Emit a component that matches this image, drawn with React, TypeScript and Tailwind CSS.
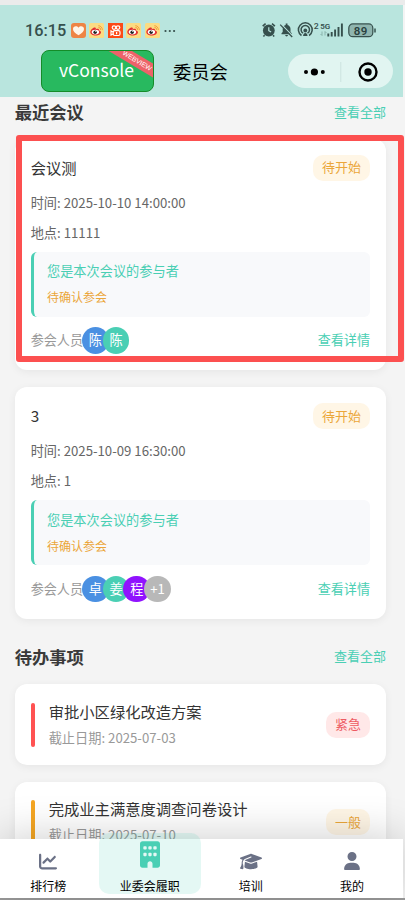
import React from 'react';
import { FaBuilding, FaChartLine, FaGraduationCap, FaUser } from 'react-icons/fa6';

interface Person {
    name: string;
    color: string;
}

interface Meeting {
    id: number;
    title: string;
    time: string;
    place: string;
    people: Person[];
}

const MEETINGS: Meeting[] = [
    {
        id: 1,
        title: '会议测',
        time: '2025-10-10 14:00:00',
        place: '11111',
        people: [
            { name: '陈', color: 'bg-[#4a90e2]' },
            { name: '陈', color: 'bg-[#4acfb4]' },
        ],
    },
    {
        id: 2,
        title: '3',
        time: '2025-10-09 16:30:00',
        place: '1',
        people: [
            { name: '卓', color: 'bg-[#4a90e2]' },
            { name: '姜', color: 'bg-[#4acfb4]' },
            { name: '程', color: 'bg-[#9013fe]' },
            { name: '+1', color: 'bg-[#b8b8b8]' },
        ],
    },
];

const TASKS = [
    { id: 1, title: '审批小区绿化改造方案', date: '2025-07-03', level: '紧急', bar: 'bg-[#ff5252]', badge: 'bg-[#ffe8e8] text-[#ee5b62]' },
    { id: 2, title: '完成业主满意度调查问卷设计', date: '2025-07-10', level: '一般', bar: 'bg-[#f5a623]', badge: 'bg-[#fff6e6] text-[#eba63a]' },
];

const WeiboIcon = () => (
    <svg viewBox="0 0 15 15" className="h-[15px] w-[15px]">
        <rect width="15" height="15" rx="1.5" fill="#fbdc83" />
        <path d="M9.3 2.7a4 4 0 0 1 4 4.4M9.4 4.4a2.2 2.2 0 0 1 2.2 2.5" fill="none" stroke="#f5a13a" strokeWidth="1" />
        <path d="M1.3 9c0-2.4 3.6-5.4 5.2-4.3.5.4.4 1 .3 1.5 2-.8 3.6-.4 3.3 1.2 1.2.3 1.9.9 1.9 1.8 0 2-2.6 3.3-5.4 3.3S1.3 11.3 1.3 9z" fill="#e22f2f" />
        <ellipse cx="6.4" cy="9.1" rx="3.7" ry="2.4" fill="#fff" />
        <circle cx="6.1" cy="9.2" r="1.7" fill="#222" />
        <circle cx="6.7" cy="8.6" r=".5" fill="#fff" />
    </svg>
);

const HeartIcon = () => (
    <svg viewBox="0 0 15 15" className="h-[15px] w-[15px]">
        <rect width="15" height="15" rx="3" fill="#ee8444" />
        <path d="M7.5 12.3C4 10 2 8.2 2 5.9 2 3.2 5.8 2.2 7.5 4.8 9.2 2.2 13 3.2 13 5.9c0 2.3-2 4.1-5.5 6.4z" fill="#fff5e9" />
    </svg>
);

const VideoIcon = () => (
    <svg viewBox="0 0 15 15" className="h-[15px] w-[15px]">
        <rect width="15" height="15" fill="#fc4a16" />
        <g fill="none" stroke="#fff" strokeWidth="1.2">
            <circle cx="6" cy="4.6" r="1.8" />
            <circle cx="10" cy="4.6" r="1.8" />
            <rect x="5.2" y="7.6" width="6.8" height="4.9" rx="1.5" />
            <path d="M5.2 9 3 7.9v4.2l2.2-1.1" />
            <path d="M8.6 8.9v2.3" />
        </g>
    </svg>
);

const StatusIcons = () => (
    <svg viewBox="0 0 118 18" className="h-[18px] w-[118px]" fill="none" stroke="#36504d">
        {/* alarm */}
        <circle cx="7.8" cy="9.5" r="5.9" fill="#36504d" stroke="none" />
        <path d="M1.7 5.2 4.6 2.7M11 2.7l2.9 2.5M3.6 14.2 2.4 15.5M12 14.2l1.2 1.3" strokeWidth="1.6" />
        <path d="M7.8 6.2v3.5l2.3 1.4" stroke="#b9e5de" strokeWidth="1.2" />
        {/* muted bell */}
        <path d="M20.5 13.2v-1l1.2-1.2V8c0-2.2 1.4-3.6 3-4V2.6h1.8V4c1.8.4 3 2 3 4v3l1.2 1.2v1zM24.2 14h2.8c0 1.9-2.8 1.9-2.8 0z" fill="#36504d" stroke="none" />
        <path d="m20 3 12.5 13" stroke="#b9e5de" strokeWidth="1.2" />
        <path d="m19.2 3.6 12 12.4" strokeWidth="1.3" />
        {/* hotspot */}
        <path d="M40.5 14.5a6.9 6.9 0 1 1 7.6 0M42.1 12.2a4.2 4.2 0 1 1 4.4 0" strokeWidth="1.5" />
        <circle cx="44.3" cy="9.5" r="1.9" fill="#36504d" stroke="none" />
        <path d="M42.1 15c0-4 4.4-4 4.4 0z" fill="#36504d" stroke="none" />
        <text x="52.7" y="7.6" fontSize="8" fontWeight="600" fontFamily="Inter, sans-serif" fill="#36504d" stroke="none">2</text>
        <text x="59.2" y="8.2" fontSize="8" fontWeight="600" fontFamily="Roboto, sans-serif" fill="#36504d" stroke="none">5G</text>
        <path d="M61 10.5v4M59.5 13l1.5 1.5M64 14.5v-4M65.5 12l-1.5-1.5" stroke="#7da8a1" strokeWidth=".8" />
        <path d="M67.3 15.5v-3M70.7 15.5V11M74.1 15.5V8.5M77.5 15.5V6M80.9 15.5V2.5" strokeWidth="1.9" />
        {/* battery */}
        <rect x="87.8" y="2.9" width="24" height="12.8" rx="4" fill="#8fb5af" strokeWidth="1.2" />
        <path d="M114 7.5v4" strokeWidth="1.5" />
        <text x="99.8" y="13.5" fontSize="11.5" fontWeight="600" textAnchor="middle" fontFamily="Roboto, sans-serif" letterSpacing=".5" fill="#29413e" stroke="none">89</text>
    </svg>
);

const Header = () => (
    <header className="mr-0.5 h-[92px] shrink-0 bg-[#b9e5de]">
        <div className="flex h-[45px] items-center justify-between pt-[6px] pr-[24px] pl-[25px]">
            <div className="flex items-center gap-[3.5px]">
                <span className="w-[42px] font-['Roboto','Noto_Sans_CJK_SC',sans-serif] text-[16.3px] leading-5 font-medium text-[#36504d]">16:15</span>
                <HeartIcon />
                <WeiboIcon />
                <VideoIcon />
                <WeiboIcon />
                <WeiboIcon />
                <svg viewBox="0 0 12 4" className="ml-px h-1 w-3" fill="#36504d">
                    <circle cx="1.5" cy="2" r="1.1" />
                    <circle cx="5.8" cy="2" r="1.1" />
                    <circle cx="10.1" cy="2" r="1.1" />
                </svg>
            </div>
            <div className="-mt-px">
                <StatusIcons />
            </div>
        </div>
        <div className="flex h-[42px] items-center pr-[10px] pl-[41px]">
            <div className="relative flex h-[42px] w-[113px] items-center justify-center overflow-hidden rounded-[8px] border border-[#148c28] bg-[#28b95f] pr-0.5 pb-0.5 text-[17.5px] text-white">
                vConsole
                <span className="absolute top-[4px] -right-[19px] w-[70px] rotate-[31deg] bg-[#ee6269] text-center font-['Liberation_Sans',sans-serif] text-[6.8px] leading-[12px]">WEBVIEW</span>
            </div>
            <h1 className="ml-[19px] text-[18.3px] leading-6 text-black">委员会</h1>
            <div className="ml-auto flex h-[34px] w-[105px] items-center rounded-full bg-[#e1f5f1]">
                <svg viewBox="0 0 105 34" className="h-full w-full">
                    <circle cx="18" cy="18" r="2" />
                    <circle cx="26.4" cy="18" r="3.6" />
                    <circle cx="34.8" cy="18" r="2" />
                    <path d="M52.8 8v20" stroke="#cce3df" />
                    <circle cx="80" cy="18" r="8.5" fill="none" stroke="#000" strokeWidth="2.4" />
                    <circle cx="80" cy="18" r="3.7" />
                </svg>
            </div>
        </div>
    </header>
);

const SectionTitle: React.FC<{ title: string }> = ({ title }) => (
    <div className="flex h-8 items-center justify-between pb-[2px]">
        <h2 className="text-[17.3px] font-bold text-[#3a3a3a]">{title}</h2>
        <span className="pb-px text-[13px] text-[#4acfb4]">查看全部</span>
    </div>
);

const MeetingCard: React.FC<{ meeting: Meeting }> = ({ meeting }) => (
    <div className="h-[231.5px] rounded-xl bg-white px-4 pt-4 shadow-[0_2px_8px_rgba(0,0,0,0.06)]">
        <div className="flex h-[26px] items-center justify-between">
            <h3 className="pb-px text-[15.3px] text-[#333]">{meeting.title}</h3>
            <span className="flex h-[26px] w-[57px] items-center justify-center rounded-[10px] bg-[#fff6e6] pb-px text-[13px] text-[#eba63a]">待开始</span>
        </div>
        <p className="mt-[12px] text-[13.2px] leading-5 text-[#666]">时间: {meeting.time}</p>
        <p className="mt-2.5 text-[13.2px] leading-5 text-[#666]">地点: {meeting.place}</p>
        <div className="mt-[9px] h-[65px] rounded-md border-l-[3px] border-[#4acfb4] bg-[#f8f9fb] pt-[9.5px] pl-[13.3px]">
            <p className="text-[13.2px] leading-5 text-[#4acfb4]">您是本次会议的参与者</p>
            <p className="mt-1.5 text-[12px] leading-5 text-[#eba63a]">待确认参会</p>
        </div>
        <div className="mt-[10.5px] flex h-[26.5px] items-center justify-between text-[13.1px]">
            <div className="flex items-center">
                <span className="-mr-px text-[#999]">参会人员</span>
                {meeting.people.map((person, i) => (
                    <span key={i} className={`relative -mr-[5.8px] flex h-[26.5px] w-[26.5px] items-center justify-center rounded-full text-white ${person.color}`}>
                        {person.name}
                    </span>
                ))}
            </div>
            <span className="text-[#4acfb4]">查看详情</span>
        </div>
    </div>
);

const TaskCard: React.FC<{ task: (typeof TASKS)[number] }> = ({ task }) => (
    <div className="flex h-[81px] items-center rounded-xl bg-white px-4 shadow-[0_2px_8px_rgba(0,0,0,0.06)]">
        <div className={`h-11 w-[4.5px] rounded-full ${task.bar}`}></div>
        <div className="ml-[13.5px] flex-1 pb-[3px]">
            <p className="text-[15.3px] leading-6 text-[#333]">{task.title}</p>
            <p className="mt-[5px] text-[13.2px] leading-5 text-[#999]">截止日期: {task.date}</p>
        </div>
        <span className={`flex h-[26px] w-[44px] items-center justify-center rounded-[10px] pb-px text-[13px] ${task.badge}`}>{task.level}</span>
    </div>
);

const TabBar = () => (
    <nav className="relative mr-0.5 grid h-[59px] shrink-0 grid-cols-4 bg-white text-center text-[12px] leading-4 text-black shadow-[0_-4px_40px_rgba(0,0,0,0.18)]">
        <div className="flex flex-col items-center pt-[13px] pr-1">
            <FaChartLine className="h-[19px] w-[18px] text-[#6b7186]" />
            <span className="mt-[7px]">排行榜</span>
        </div>
        <div className="-mt-1.5 mr-px -ml-[1.5px] flex h-[61px] flex-col items-center rounded-[10px] bg-[#4acfb4]/15 pt-2">
            <FaBuilding className="h-[27px] w-[20px] text-[#4acfb4]" />
            <span className="mt-[10px]">业委会履职</span>
        </div>
        <div className="flex flex-col items-center pt-[13px] pr-0.5">
            <FaGraduationCap className="h-[19px] w-[22px] text-[#6b7186]" />
            <span className="mt-[7px]">培训</span>
        </div>
        <div className="flex flex-col items-center pt-[13px] pr-px">
            <FaUser className="h-[18px] w-[16px] text-[#6b7186]" />
            <span className="mt-2">我的</span>
        </div>
    </nav>
);

export default function App() {
    return (
        <div className="relative flex h-[900px] w-[405px] flex-col overflow-hidden bg-[#f4f4f4] font-['Noto_Sans_CJK_SC',sans-serif]">
            <div className="h-[5px] shrink-0 bg-[#ebebeb]"></div>
            <Header />
            <main className="min-h-0 flex-1 overflow-hidden pr-[19px] pl-[14.7px]">
                <SectionTitle title="最近会议" />
                <div className="mt-[9.5px] space-y-[17px]">
                    {MEETINGS.map(meeting => (
                        <MeetingCard key={meeting.id} meeting={meeting} />
                    ))}
                </div>
                <div className="mt-[23px]">
                    <SectionTitle title="待办事项" />
                </div>
                <div className="mt-[10.5px] space-y-[16.5px]">
                    {TASKS.map(task => (
                        <TaskCard key={task.id} task={task} />
                    ))}
                </div>
            </main>
            <TabBar />
            <div className="h-0.5 shrink-0 bg-[#9b9b9b]"></div>

            {/* Highlight frame over the first meeting */}
            <div className="pointer-events-none absolute top-[135px] left-[16px] h-[227px] w-[388px] rounded-[3px] border-[6px] border-[#fc5050]"></div>
        </div>
    );
}
